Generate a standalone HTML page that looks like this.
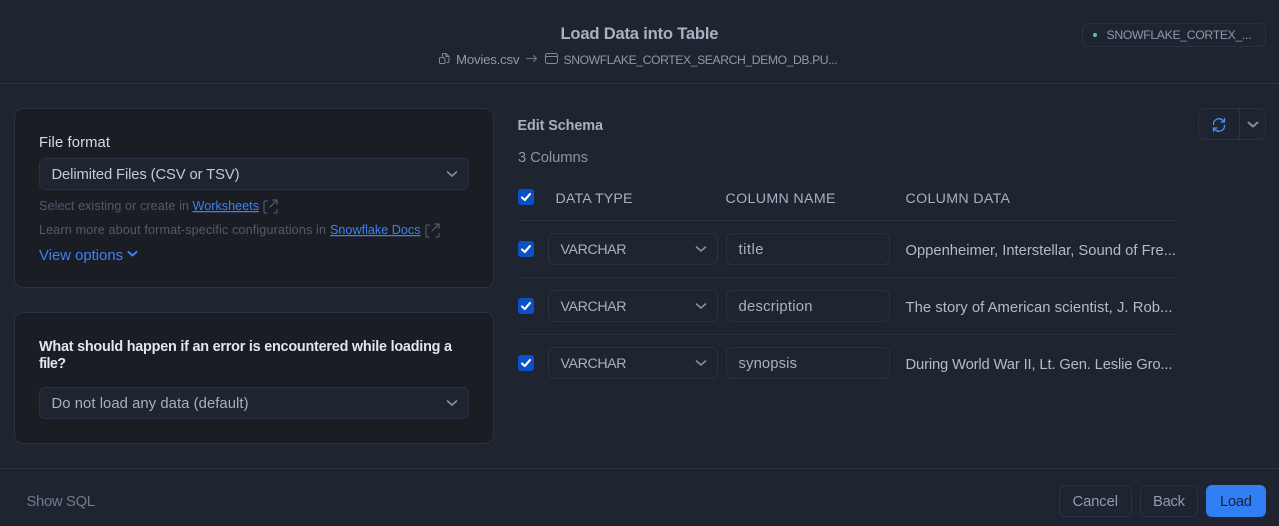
<!DOCTYPE html>
<html><head><meta charset="utf-8"><title>Load Data into Table</title>
<style>
html,body{margin:0;padding:0;background:#1e2530;width:1279px;height:526px;overflow:hidden}
svg{display:block}
text{font-family:"Liberation Sans",sans-serif;font-size:14.8px;fill:#a9b0c2;white-space:pre}
.b{font-weight:bold;font-size:14.4px}
.box{fill:#1e2530;stroke:#2a3145;stroke-width:1}
.card{fill:#1a1d24;stroke:#2a3145;stroke-width:1}
.sel{fill:#1e2530;stroke:#2a3145;stroke-width:1}
.ln{stroke:#2a3145;stroke-width:1}
.chev{fill:none;stroke:#858d9f;stroke-width:1.7;stroke-linecap:round;stroke-linejoin:round}
.chk{fill:none;stroke:#fff;stroke-width:2.1;stroke-linecap:round;stroke-linejoin:round}
.ic{fill:none;stroke:#8089 9b;stroke:#80899b;stroke-width:1;stroke-linecap:round;stroke-linejoin:round}
.ext{fill:none;stroke:#5a6377;stroke-width:1;stroke-linecap:round;stroke-linejoin:round}
.lk{fill:#3b82f6;text-decoration:underline;font-size:12.6px}
.hint{fill:#515a6e;font-size:12.6px}
.up{font-size:12.2px;fill:#9098aa}
.t{font-size:13.3px;fill:#9098aa}
.chd{font-size:14.2px}
</style></head><body>
<svg width="1279" height="526" viewBox="0 0 1279 526" xmlns="http://www.w3.org/2000/svg">
<rect width="1279" height="526" fill="#1e2530"/>
<path class="ln" d="M0 83.5H1279M0 468.5H1279"/>

<text class="b" x="560.5" y="39" style="font-size:16.6px;fill:#a9b0c2" textLength="158" lengthAdjust="spacing">Load Data into Table</text>
<path class="ic" d="M442.500 56.500v-2a1 1 0 0 1 1-1h2.500l3 3v5a1 1 0 0 1-1 1h-1M446 53.500v3h3M439.500 58.500a1 1 0 0 1 1-1h3l1.500 1.500v3.500a1 1 0 0 1-1 1h-3.500a1 1 0 0 1-1-1z"/>
<text class="t" x="456" y="64" textLength="63.500" lengthAdjust="spacing">Movies.csv</text>
<path class="ic" style="stroke:#6f788b" d="M526.500 58.500h10M533.500 55.500l3 3-3 3"/>
<rect class="ic" x="545.500" y="53.500" width="12" height="10" rx="2"/><path class="ic" d="M545.500 56.500h12"/>
<text class="up" x="563.500" y="64" textLength="274" lengthAdjust="spacing">SNOWFLAKE_CORTEX_SEARCH_DEMO_DB.PU...</text>

<rect class="box" x="1082.500" y="23.500" width="183" height="23" rx="6"/>
<circle cx="1095" cy="35" r="2" fill="#3fd3a0"/>
<text class="up" x="1106.500" y="39" style="fill:#8f97a9" textLength="145" lengthAdjust="spacing">SNOWFLAKE_CORTEX_...</text>

<rect class="card" x="14.500" y="108.500" width="479" height="179" rx="8"/>
<text x="39" y="147" style="fill:#d5dae4" textLength="71" lengthAdjust="spacing">File format</text>
<rect class="sel" x="39.500" y="158.500" width="429" height="31" rx="6"/>
<text x="51.500" y="179" style="fill:#c5cad5" textLength="188" lengthAdjust="spacing">Delimited Files (CSV or TSV)</text>
<path class="chev" d="M447.500 172l4.500 4 4.500-4"/>
<text class="hint" x="39" y="210" textLength="150" lengthAdjust="spacing">Select existing or create in</text>
<text class="lk" x="192.500" y="210" textLength="66.500" lengthAdjust="spacing">Worksheets</text>
<path class="ext" d="M267.500 201h-2.500a1 1 0 0 0-1 1v10a1 1 0 0 0 1 1h2M274 213h2a1 1 0 0 0 1-1v-2.500M270 207l6.500-6.500M272.500 200h4.500v4.500"/>
<text class="hint" x="39" y="234" textLength="287" lengthAdjust="spacing">Learn more about format-specific configurations in</text>
<text class="lk" x="330" y="234" textLength="90.500" lengthAdjust="spacing">Snowflake Docs</text>
<path class="ext" d="M429.500 225h-2.500a1 1 0 0 0-1 1v10a1 1 0 0 0 1 1h2M436 237h2a1 1 0 0 0 1-1v-2.500M432 231l6.500-6.500M434.500 224h4.500v4.500"/>
<text x="39" y="260" style="fill:#3f82f5" textLength="84" lengthAdjust="spacing">View options</text>
<path class="chev" style="stroke:#3f82f5;stroke-width:2" d="M128.500 252l4 3.500 4-3.500"/>

<rect class="card" x="14.500" y="312.500" width="479" height="131" rx="8"/>
<text class="b" x="39" y="351" style="fill:#e2e5ea" textLength="413" lengthAdjust="spacing">What should happen if an error is encountered while loading a</text>
<text class="b" x="39" y="368" style="fill:#e2e5ea" textLength="27" lengthAdjust="spacing">file?</text>
<rect class="sel" x="39.500" y="387.500" width="429" height="31" rx="6"/>
<text x="51.500" y="408" style="fill:#a9b0c2" textLength="197" lengthAdjust="spacing">Do not load any data (default)</text>
<path class="chev" d="M447.500 401l4.500 4 4.500-4"/>

<text class="b" x="517.500" y="130" style="fill:#a9b0c2" textLength="85.500" lengthAdjust="spacing">Edit Schema</text>
<text x="518" y="162" style="fill:#8c94a6" textLength="70" lengthAdjust="spacing">3 Columns</text>

<rect class="box" x="1198.500" y="108.500" width="67" height="31" rx="6"/>
<path class="ln" d="M1239.500 108.500V139.500"/>
<g fill="none" stroke="#4a90f0" stroke-width="1.300" stroke-linecap="round" stroke-linejoin="round">
<path d="M1213.500 124.500a5.500 5.500 0 0 1 9.500-4l1.500 1.500M1224.500 118.500v3.500h-3.500"/>
<path d="M1224.500 125.500a5.500 5.500 0 0 1-9.500 4l-1.500-1.500M1213.500 131.500v-3.500h3.500"/>
</g>
<path class="chev" style="stroke-width:2" d="M1248.500 122.500l4.500 4 4.500-4"/>

<rect x="518" y="189" width="16" height="16" rx="3" fill="#0b50c4"/>
<path class="chk" d="M522 197.500l2.800 2.500 5.200-6"/>
<text class="chd" x="555.500" y="203" textLength="77" lengthAdjust="spacing">DATA TYPE</text>
<text class="chd" x="725.500" y="203" textLength="110" lengthAdjust="spacing">COLUMN NAME</text>
<text class="chd" x="905.500" y="203" textLength="104.500" lengthAdjust="spacing">COLUMN DATA</text>
<path class="ln" d="M518 220.500H1178M518 277.500H1178M518 334.500H1178"/>

<rect x="518" y="241" width="16" height="16" rx="3" fill="#0b50c4"/>
<path class="chk" d="M522 249.500l2.800 2.500 5.200-6"/>
<rect class="sel" x="548.500" y="233.500" width="169" height="31" rx="6"/>
<text class="chd" x="560.500" y="254" textLength="66" lengthAdjust="spacing">VARCHAR</text>
<path class="chev" d="M696.500 247l4.500 4 4.500-4"/>
<rect class="sel" x="726.500" y="233.500" width="163" height="31" rx="6"/>
<text x="738.500" y="254" textLength="25" lengthAdjust="spacing">title</text>
<text x="905.500" y="255" style="fill:#b4bac8" textLength="270.500" lengthAdjust="spacing">Oppenheimer, Interstellar, Sound of Fre...</text>

<rect x="518" y="298" width="16" height="16" rx="3" fill="#0b50c4"/>
<path class="chk" d="M522 306.500l2.800 2.500 5.200-6"/>
<rect class="sel" x="548.500" y="290.500" width="169" height="31" rx="6"/>
<text class="chd" x="560.500" y="311" textLength="66" lengthAdjust="spacing">VARCHAR</text>
<path class="chev" d="M696.500 304l4.500 4 4.500-4"/>
<rect class="sel" x="726.500" y="290.500" width="163" height="31" rx="6"/>
<text x="738.500" y="311" textLength="74" lengthAdjust="spacing">description</text>
<text x="905.500" y="312" style="fill:#b4bac8" textLength="267" lengthAdjust="spacing">The story of American scientist, J. Rob...</text>

<rect x="518" y="355" width="16" height="16" rx="3" fill="#0b50c4"/>
<path class="chk" d="M522 363.500l2.800 2.500 5.200-6"/>
<rect class="sel" x="548.500" y="347.500" width="169" height="31" rx="6"/>
<text class="chd" x="560.500" y="368" textLength="66" lengthAdjust="spacing">VARCHAR</text>
<path class="chev" d="M696.500 361l4.500 4 4.500-4"/>
<rect class="sel" x="726.500" y="347.500" width="163" height="31" rx="6"/>
<text x="738.500" y="368" textLength="58.500" lengthAdjust="spacing">synopsis</text>
<text x="905.500" y="369" style="fill:#b4bac8" textLength="267" lengthAdjust="spacing">During World War II, Lt. Gen. Leslie Gro...</text>

<text x="26.500" y="506" style="fill:#6f7a8e" textLength="68.500" lengthAdjust="spacing">Show SQL</text>
<rect class="box" x="1059.500" y="485.500" width="72" height="31" rx="6"/>
<text x="1072.500" y="506" style="fill:#8f9bb0" textLength="45.500" lengthAdjust="spacing">Cancel</text>
<rect class="box" x="1140.500" y="485.500" width="57" height="31" rx="6"/>
<text x="1153" y="506" style="fill:#8f9bb0" textLength="32" lengthAdjust="spacing">Back</text>
<rect x="1206" y="485" width="60" height="32" rx="6" fill="#317ff5"/>
<text x="1220" y="506" style="fill:#15233c" textLength="32" lengthAdjust="spacing">Load</text>
</svg>
</body></html>
